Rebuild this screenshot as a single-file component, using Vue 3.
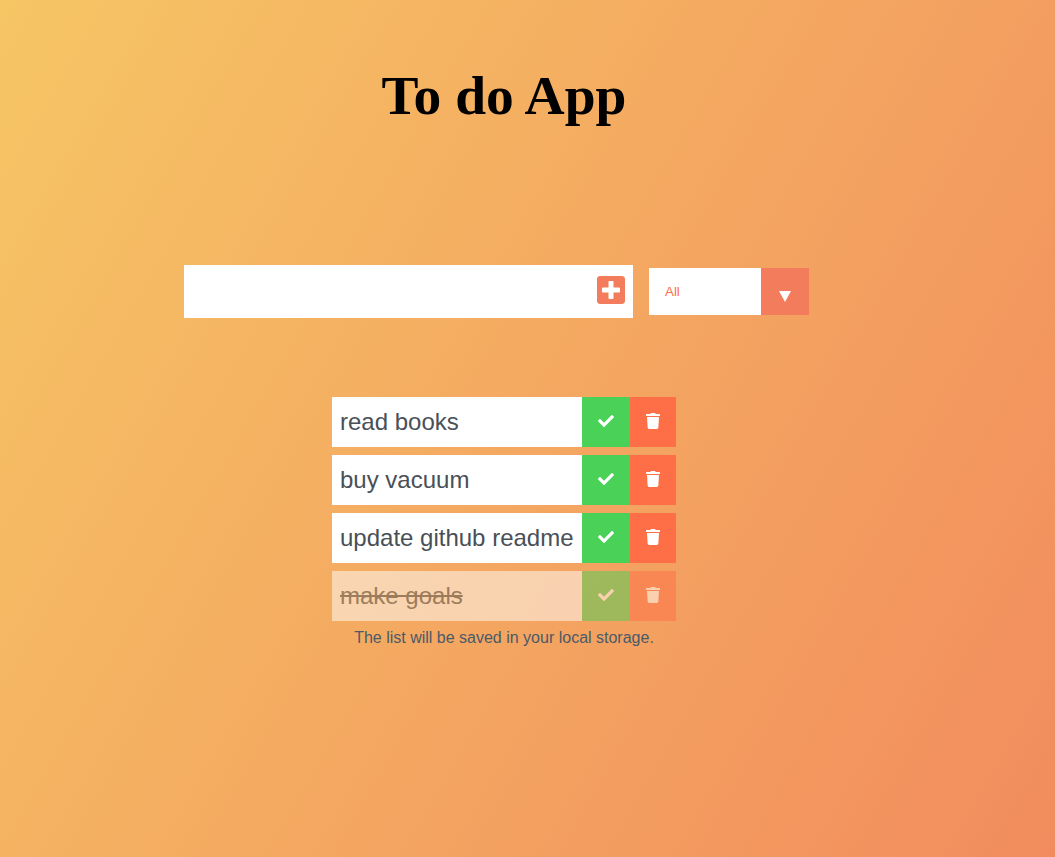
<script setup>
const todos = [
  { id: 1, text: 'read books', done: false },
  { id: 2, text: 'buy vacuum', done: false },
  { id: 3, text: 'update github readme', done: false },
  { id: 4, text: 'make goals', done: true }
]
</script>

<template>
  <div class="app">
    <header class="header"><h1>To do App</h1></header>
    <form class="form" @submit.prevent>
      <div class="input-wrap">
        <input class="todo-input" type="text" />
        <button class="add" type="button" aria-label="Add">
          <svg viewBox="0 0 448 512" width="28" height="32"><path fill="currentColor" d="M400 32H48C21.5 32 0 53.5 0 80v352c0 26.5 21.5 48 48 48h352c26.5 0 48-21.5 48-48V80c0-26.5-21.5-48-48-48zm-32 252c0 6.6-5.4 12-12 12h-92v92c0 6.6-5.4 12-12 12h-56c-6.6 0-12-5.4-12-12v-92H92c-6.6 0-12-5.4-12-12v-56c0-6.6 5.4-12 12-12h92v-92c0-6.6 5.4-12 12-12h56c6.6 0 12 5.4 12 12v92h92c6.6 0 12 5.4 12 12v56z"/></svg>
        </button>
      </div>
      <div class="select">
        <span class="select-label">All</span>
        <span class="select-arrow"><i class="tri"></i></span>
      </div>
    </form>
    <ul class="list">
      <li v-for="t in todos" :key="t.id" class="todo" :class="{ done: t.done }">
        <span class="text">{{ t.text }}</span>
        <button class="btn check" type="button" aria-label="Complete">
          <svg viewBox="0 0 512 512" width="16" height="16"><path fill="currentColor" d="M173.898 439.404l-166.4-166.4c-9.997-9.997-9.997-26.206 0-36.204l36.203-36.204c9.997-9.998 26.207-9.998 36.204 0L192 312.69 432.095 72.596c9.997-9.997 26.207-9.997 36.204 0l36.203 36.204c9.997 9.997 9.997 26.206 0 36.204l-294.4 294.401c-9.998 9.997-26.207 9.997-36.204-.001z"/></svg>
        </button>
        <button class="btn trash" type="button" aria-label="Delete">
          <svg viewBox="0 0 448 512" width="14" height="16"><path fill="currentColor" d="M432 32H312l-9.4-18.7A24 24 0 0 0 281.1 0H166.8a23.72 23.72 0 0 0-21.4 13.3L136 32H16A16 16 0 0 0 0 48v32a16 16 0 0 0 16 16h416a16 16 0 0 0 16-16V48a16 16 0 0 0-16-16zM53.2 467a48 48 0 0 0 47.9 45h245.8a48 48 0 0 0 47.9-45L416 128H32z"/></svg>
        </button>
      </li>
    </ul>
    <p class="note">The list will be saved in your local storage.</p>
  </div>
</template>

<style>
html, body { margin: 0; height: 100%; }
#app { min-height: 100%; }
</style>

<style scoped>
.app {
  box-sizing: border-box;
  height: 857px;
  padding-right: 47px;
  background: linear-gradient(120deg, #f6c564, #f28c5e);
  color: #495057;
  font-family: "Liberation Sans", Arial, sans-serif;
  overflow: hidden;
}
.header { padding-top: 64px; text-align: center; }
h1 {
  margin: 0;
  font-family: "Liberation Serif", "Times New Roman", serif;
  font-size: 55.5px;
  line-height: 64px;
  font-weight: 700;
  color: #000;
}
.form {
  display: flex;
  align-items: center;
  justify-content: center;
  gap: 16px;
  margin-top: 137px;
  padding-right: 15px;
}
.input-wrap {
  display: flex;
  align-items: center;
  width: 449px;
  height: 53px;
  background: #fff;
}
.todo-input {
  flex: 1;
  min-width: 0;
  height: 100%;
  border: 0;
  outline: 0;
  background: transparent;
  padding: 0 8px;
  font-size: 24px;
}
.add {
  display: flex;
  border: 0;
  padding: 0;
  margin: -4px 8px 0 0;
  background: none;
  color: #f37c5c;
}
.select {
  display: flex;
  width: 160px;
  height: 47px;
  background: #fff;
}
.select-label {
  flex: 1;
  padding-left: 16px;
  font-size: 13.33px;
  line-height: 47px;
  color: #ff6f47;
}
.select-arrow {
  display: flex;
  align-items: center;
  justify-content: center;
  width: 48px;
  background: #f37c5c;
}
.tri {
  width: 0;
  height: 0;
  margin-top: 9px;
  border-left: 6px solid transparent;
  border-right: 6px solid transparent;
  border-top: 11px solid #fff;
}
.list {
  list-style: none;
  display: flex;
  flex-direction: column;
  align-items: center;
  gap: 8px;
  margin: 79px 0 0;
  padding: 0;
}
.todo {
  display: flex;
  width: 344px;
  height: 50px;
}
.todo.done { opacity: 0.5; }
.text {
  box-sizing: border-box;
  width: 250px;
  padding-left: 8px;
  background: #fff;
  font-size: 24px;
  line-height: 50px;
  white-space: nowrap;
}
.done .text { text-decoration: line-through; }
.btn {
  display: flex;
  align-items: center;
  justify-content: center;
  border: 0;
  padding: 0;
  color: #fff;
}
.check { width: 48px; background: #4ad158; }
.trash { width: 46px; background: #ff6f47; }
.btn svg { margin-top: -2px; }
.note {
  margin: 6px 0 0;
  padding-top: 1px;
  text-align: center;
  font-size: 16px;
  line-height: 20px;
  color: #4a5a68;
}
</style>
